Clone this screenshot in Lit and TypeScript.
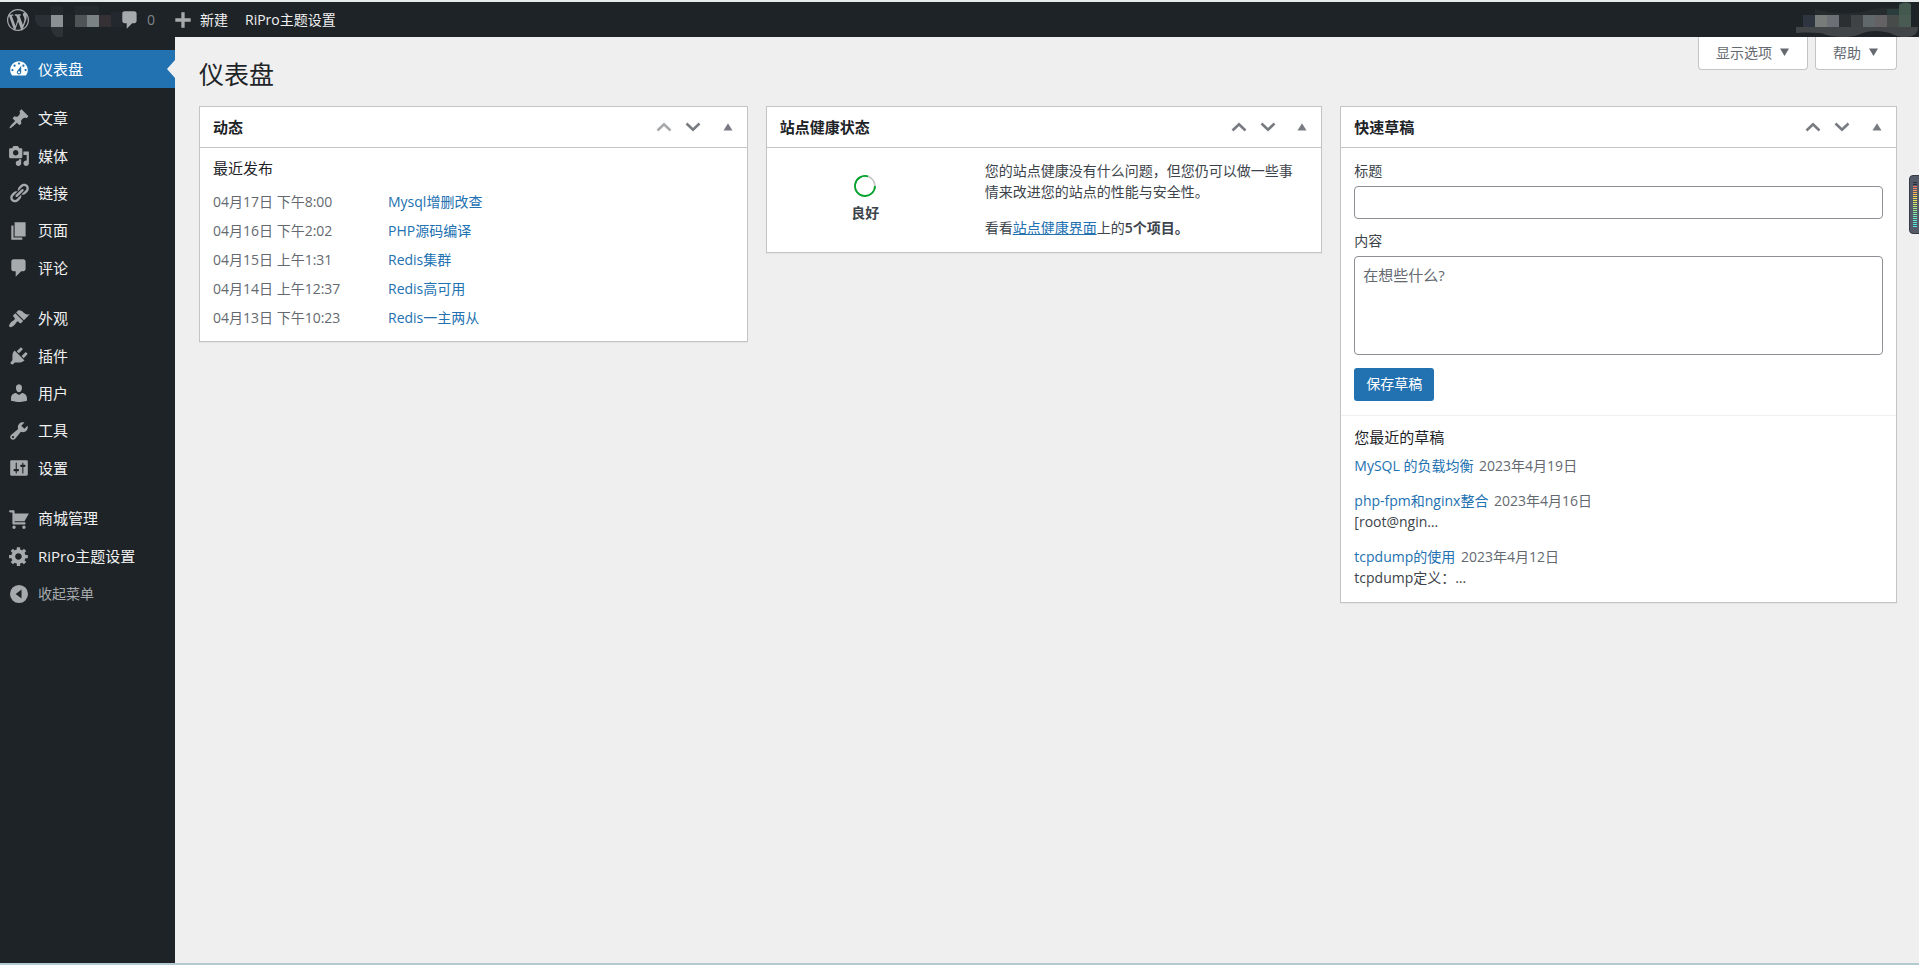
import { LitElement, html, svg, css } from "lit";
import { customElement, property } from "lit/decorators.js";
import { classMap } from "lit/directives/class-map.js";

const ICONS: Record<string, string> = {
  wordpress:
    "M20 10c0-5.51-4.49-10-10-10C4.48 0 0 4.49 0 10c0 5.52 4.48 10 10 10 5.51 0 10-4.48 10-10zM7.78 15.37L4.37 6.22c.55-.02 1.17-.08 1.17-.08.5-.06.44-1.13-.06-1.11 0 0-1.45.11-2.37.11-.18 0-.37 0-.58-.01C4.12 2.69 6.87 1.11 10 1.11c2.33 0 4.45.87 6.05 2.34-.68-.11-1.65.39-1.65 1.58 0 .74.45 1.36.9 2.1.35.61.55 1.36.55 2.46 0 1.49-1.4 5-1.4 5l-3.03-8.37c.54-.02.82-.17.82-.17.5-.05.44-1.25-.06-1.22 0 0-1.44.12-2.38.12-.87 0-2.33-.12-2.33-.12-.5-.03-.56 1.2-.06 1.22l.92.08 1.26 3.41zM17.41 10c.24-.64.74-1.87.43-4.25.7 1.29 1.05 2.71 1.05 4.25 0 3.29-1.73 6.24-4.4 7.78.97-2.59 1.94-5.2 2.92-7.78zM6.1 18.09C3.12 16.65 1.11 13.53 1.11 10c0-1.3.23-2.48.72-3.59C3.25 10.3 4.67 14.2 6.1 18.09zm4.03-6.63l2.58 6.98c-.86.29-1.76.45-2.71.45-.79 0-1.57-.11-2.29-.33.81-2.38 1.62-4.74 2.42-7.1z",
  plus: "M17 8.5v3h-5.5V17h-3v-5.5H3v-3h5.5V3h3v5.5z",
  dashboard:
    "M3.76 16h12.48c1.1-1.37 1.76-3.11 1.76-5 0-4.42-3.58-8-8-8s-8 3.58-8 8c0 1.89.66 3.63 1.76 5zM10 4c.55 0 1 .45 1 1s-.45 1-1 1-1-.45-1-1 .45-1 1-1zM6 6c.55 0 1 .45 1 1s-.45 1-1 1-1-.45-1-1 .45-1 1-1zm8 0c.55 0 1 .45 1 1s-.45 1-1 1-1-.45-1-1 .45-1 1-1zm-5.37 5.55L12 7v6c0 1.1-.9 2-2 2s-2-.9-2-2c0-.57.24-1.08.63-1.45zM4 10c.55 0 1 .45 1 1s-.45 1-1 1-1-.45-1-1 .45-1 1-1zm12 0c.55 0 1 .45 1 1s-.45 1-1 1-1-.45-1-1 .45-1 1-1zm-5 3c0-.55-.45-1-1-1s-1 .45-1 1 .45 1 1 1 1-.45 1-1z",
  post: "M10.44 3.02l1.82-1.82 6.36 6.35-1.83 1.82c-1.05-.68-2.48-.57-3.41.36l-.75.75c-.92.93-1.04 2.35-.35 3.41l-1.83 1.82-2.41-2.41-2.8 2.79c-.42.42-3.38 2.71-3.8 2.29s1.86-3.39 2.28-3.81l2.79-2.79L4.1 9.36l1.83-1.82c1.05.69 2.48.57 3.4-.36l.75-.75c.93-.92 1.05-2.35.36-3.41z",
  media:
    "M13 11V4c0-.55-.45-1-1-1h-1.67L9 1H5L3.67 3H2c-.55 0-1 .45-1 1v7c0 .55.45 1 1 1h10c.55 0 1-.45 1-1zM7 4.5c1.38 0 2.5 1.12 2.5 2.5S8.38 9.5 7 9.5 4.5 8.38 4.5 7 5.62 4.5 7 4.5zM14 6h5v10.5c0 1.38-1.12 2.5-2.5 2.5S14 17.88 14 16.5s1.12-2.5 2.5-2.5c.17 0 .34.02.5.05V9h-3V6zm-4 8.05V13h2v3.5c0 1.38-1.12 2.5-2.5 2.5S7 17.88 7 16.5 8.12 14 9.5 14c.17 0 .34.02.5.05z",
  link: "M17.74 2.76c1.68 1.69 1.68 4.41 0 6.1l-1.53 1.52c-1.12 1.12-2.7 1.47-4.14 1.09l2.62-2.61.76-.77.76-.76c.84-.84.84-2.2 0-3.04-.84-.85-2.2-.85-3.04 0l-.77.76-3.38 3.38c-.37-1.44-.02-3.02 1.1-4.14l1.52-1.53c1.69-1.68 4.42-1.68 6.1 0zM8.59 13.43l5.34-5.34c.42-.42.42-1.1 0-1.52-.44-.43-1.13-.39-1.53 0l-5.33 5.34c-.42.42-.42 1.1 0 1.52.44.43 1.13.39 1.52 0zm-.76 2.29l4.14-4.15c.38 1.44.03 3.02-1.09 4.14l-1.52 1.53c-1.69 1.68-4.41 1.68-6.1 0-1.68-1.68-1.68-4.42 0-6.1l1.53-1.52c1.12-1.12 2.7-1.47 4.14-1.1l-4.14 4.15c-.85.84-.85 2.2 0 3.05.84.84 2.2.84 3.04 0z",
  page: "M6 15V2h10v13H6zm-1 1h8v2H3V5h2v11z",
  comment:
    "M5 2h9c1.1 0 2 .9 2 2v7c0 1.1-.9 2-2 2h-2l-5 5v-5H5c-1.1 0-2-.9-2-2V4c0-1.1.9-2 2-2z",
  appearance:
    "M14.48 11.06L7.41 3.99l1.5-1.5c.5-.56 2.3-.47 3.51.32 1.21.8 1.43 1.28 2.91 2.1 1.18.64 2.45 1.26 4.45.85zm-.71.71L6.7 4.7 4.93 6.47c-.39.39-.39 1.02 0 1.41l1.06 1.06c.39.39.39 1.03 0 1.42-.6.6-1.43 1.11-2.21 1.69-.35.26-.7.53-1.01.84C1.43 14.23.4 16.08 1.4 17.07c.99 1 2.84-.03 4.18-1.36.31-.31.58-.66.85-1.02.57-.78 1.08-1.61 1.69-2.21.39-.39 1.02-.39 1.41 0l1.06 1.06c.39.39 1.02.39 1.41 0z",
  plugin:
    "M13.11 4.36L9.87 7.6 8 5.73l3.24-3.24c.35-.34 1.05-.2 1.56.32.52.51.66 1.21.31 1.55zm-8 1.77l.91-1.12 9.01 9.01-1.19.84c-.71.71-2.63 1.16-3.82 1.16H6.14L4.9 17.26c-.59.59-1.54.59-2.12 0-.59-.58-.59-1.53 0-2.12l1.24-1.24v-3.88c0-1.13.4-3.19 1.09-3.89zm7.26 3.97l3.24-3.24c.34-.35 1.04-.21 1.55.31.52.51.66 1.21.31 1.55l-3.24 3.25z",
  user: "M10 9.25c-2.27 0-2.73-3.44-2.73-3.44C7 4.02 7.82 2 9.97 2c2.16 0 2.98 2.02 2.71 3.81 0 0-.41 3.44-2.68 3.44zm0 2.57L12.72 10c2.39 0 4.52 2.33 4.52 4.53v2.49s-3.65 1.13-7.24 1.13c-3.65 0-7.24-1.13-7.24-1.13v-2.49c0-2.25 1.94-4.48 4.47-4.48z",
  tool: "M16.68 9.77c-1.34 1.34-3.3 1.67-4.95.99l-5.41 6.52c-.99.99-2.59.99-3.58 0s-.99-2.59 0-3.57l6.52-5.42c-.68-1.65-.35-3.61.99-4.95 1.28-1.28 3.12-1.62 4.72-1.06l-2.89 2.89 2.82 2.82 2.86-2.87c.53 1.58.18 3.39-1.08 4.65zM3.81 16.21c.4.39 1.04.39 1.43 0 .4-.4.4-1.04 0-1.43-.39-.4-1.03-.4-1.43 0-.39.39-.39 1.03 0 1.43z",
  settings:
    "M18 16V4c0-.55-.45-1-1-1H3c-.55 0-1 .45-1 1v12c0 .55.45 1 1 1h14c.55 0 1-.45 1-1zM8 11h1c.55 0 1 .45 1 1s-.45 1-1 1H8v1.5c0 .28-.22.5-.5.5s-.5-.22-.5-.5V13H6c-.55 0-1-.45-1-1s.45-1 1-1h1V5.5c0-.28.22-.5.5-.5s.5.22.5.5V11zm5-2h-1c-.55 0-1-.45-1-1s.45-1 1-1h1V5.5c0-.28.22-.5.5-.5s.5.22.5.5V7h1c.55 0 1 .45 1 1s-.45 1-1 1h-1v5.5c0 .28-.22.5-.5.5s-.5-.22-.5-.5V9z",
  cart: "M6 13h9c.55 0 1 .45 1 1s-.45 1-1 1H5c-.55 0-1-.45-1-1V4H2c-.55 0-1-.45-1-1s.45-1 1-1h3c.55 0 1 .45 1 1v2h13l-4 7H6v1zm-.5 3c.83 0 1.5.67 1.5 1.5S6.33 19 5.5 19 4 18.33 4 17.5 4.67 16 5.5 16zm9 0c.83 0 1.5.67 1.5 1.5s-.67 1.5-1.5 1.5-1.5-.67-1.5-1.5.67-1.5 1.5-1.5z",
  gear: "M18 12h-2.18c-.17.7-.44 1.35-.81 1.93l1.54 1.54-2.1 2.1-1.54-1.54c-.58.36-1.23.63-1.91.79V19H8v-2.18c-.68-.16-1.33-.43-1.91-.79l-1.54 1.54-2.12-2.12 1.54-1.54c-.36-.58-.63-1.23-.79-1.91H1V9.03h2.17c.16-.7.44-1.35.8-1.94L2.43 5.55l2.1-2.1 1.54 1.54c.58-.37 1.24-.64 1.93-.81V2h3v2.18c.68.16 1.33.43 1.91.79l1.54-1.54 2.12 2.12-1.54 1.54c.36.59.64 1.24.8 1.94H18V12zm-8.5 1.5c1.66 0 3-1.34 3-3s-1.34-3-3-3-3 1.34-3 3 1.34 3 3 3z",
  collapse:
    "M10 1.8a8.2 8.2 0 1 0 0 16.4a8.2 8.2 0 1 0 0-16.4zM12.3 6v8L7 10z",
};

const icon = (name: string) => html`<svg
  class="icon"
  viewBox="0 0 20 20"
  aria-hidden="true"
>
  <path fill="currentColor" fill-rule="evenodd" d=${ICONS[name]} />
</svg>`;

interface MenuItem {
  icon: string;
  label: string;
  current?: boolean;
}

const MENU: MenuItem[][] = [
  [{ icon: "dashboard", label: "仪表盘", current: true }],
  [
    { icon: "post", label: "文章" },
    { icon: "media", label: "媒体" },
    { icon: "link", label: "链接" },
    { icon: "page", label: "页面" },
    { icon: "comment", label: "评论" },
  ],
  [
    { icon: "appearance", label: "外观" },
    { icon: "plugin", label: "插件" },
    { icon: "user", label: "用户" },
    { icon: "tool", label: "工具" },
    { icon: "settings", label: "设置" },
  ],
  [
    { icon: "cart", label: "商城管理" },
    { icon: "gear", label: "RiPro主题设置" },
  ],
];

const POSTS = [
  ["04月17日 下午8:00", "Mysql增删改查"],
  ["04月16日 下午2:02", "PHP源码编译"],
  ["04月15日 上午1:31", "Redis集群"],
  ["04月14日 上午12:37", "Redis高可用"],
  ["04月13日 下午10:23", "Redis一主两从"],
];

const DRAFTS = [
  { title: "MySQL 的负载均衡", date: "2023年4月19日", excerpt: "" },
  { title: "php-fpm和nginx整合", date: "2023年4月16日", excerpt: "[root@ngin…" },
  { title: "tcpdump的使用", date: "2023年4月12日", excerpt: "tcpdump定义：…" },
];

/* Level colours of the side meter, top to bottom. */
const METER = [
  "#2a2e3a", "#2a2e3a", "#ff6f6a", "#ff8563", "#ff9b5f", "#ffb05a", "#ffc356",
  "#fdd454", "#f8e256", "#ecea5a", "#dbec62", "#c8ec6c", "#b6ec78", "#a4ec86",
  "#94ec94", "#86eca2", "#7aecb0", "#70ecbc", "#66ecc8", "#5eead0", "#58e8d6",
  "#54e6da", "#50e4dc",
];

const base = css`
  *,
  *::before {
    box-sizing: border-box;
  }
  h1,
  h2,
  h3,
  p,
  ul {
    margin: 0;
    padding: 0;
  }
  ul {
    list-style: none;
  }
  a {
    color: #2271b1;
    text-decoration: none;
  }
  button {
    margin: 0;
    padding: 0;
    border: 0;
    background: none;
    font: inherit;
    color: inherit;
    cursor: pointer;
  }
  svg {
    display: block;
    flex: none;
  }
`;

@customElement("dash-card")
class DashCard extends LitElement {
  @property() heading = "";
  @property({ type: Boolean }) first = false;

  static styles = [
    base,
    css`
      :host {
        display: block;
        background: #fff;
        border: 1px solid #c3c4c7;
        box-shadow: 0 1px 1px rgba(0, 0, 0, 0.04);
      }
      .head {
        display: flex;
        align-items: center;
        height: 41px;
        padding: 0 5px 0 13px;
        border-bottom: 1px solid #c3c4c7;
      }
      .title {
        flex: 1;
        font-size: 15px;
        line-height: 21px;
        font-weight: 600;
        color: #1d2327;
      }
      .handles {
        display: flex;
        color: #787c82;
      }
      .handle {
        display: grid;
        place-items: center;
        width: 29px;
        height: 40px;
      }
      .toggle {
        width: 28px;
        margin-left: 6px;
      }
      .handle:disabled {
        color: #a7aaad;
      }
    `,
  ];

  render() {
    return html`
      <div class="head">
        <h2 class="title">${this.heading}</h2>
        <div class="handles">
          <button class="handle" aria-label="上移" ?disabled=${this.first}>
            <svg width="16" height="10" viewBox="0 0 16 10">
              <path d="M1.5 8.5L8 2.200l6.500 6.300" fill="none" stroke="currentColor" stroke-width="2.600" />
            </svg>
          </button>
          <button class="handle" aria-label="下移">
            <svg width="16" height="10" viewBox="0 0 16 10">
              <path d="M1.5 1.5L8 7.800l6.500-6.300" fill="none" stroke="currentColor" stroke-width="2.600" />
            </svg>
          </button>
          <button class="handle toggle" aria-label="切换面板">
            <svg width="10" height="8" viewBox="0 0 10 8">
              <path d="M.5 7.500L5 .2l4.500 7.300z" fill="currentColor" />
            </svg>
          </button>
        </div>
      </div>
      <slot></slot>
    `;
  }
}

@customElement("app-root")
class AppRoot extends LitElement {
  static styles = [
    base,
    css`
      :host {
        display: flex;
        flex-direction: column;
        min-height: 100vh;
        box-sizing: border-box;
        border-top: 2px solid #e4e9ea;
        border-bottom: 2px solid #b4cad3;
        background: #efefef;
        color: #3c434a;
        font-family: "Open Sans", "Noto Sans CJK SC", sans-serif;
        font-size: 14px;
        line-height: 21px;
      }
      .icon {
        width: 22px;
        height: 22px;
      }

      /* Admin bar */
      .bar {
        display: flex;
        align-items: center;
        height: 35px;
        padding-left: 7px;
        background: #1d2327;
        color: #f0f0f1;
      }
      .bar a {
        display: flex;
        align-items: center;
        color: inherit;
      }
      .bar .icon {
        color: #a7aaad;
      }
      .site {
        margin: 0 -6px 0 6px;
      }
      .count {
        color: #80858a;
        margin: 0 17px 0 6px;
      }
      .new {
        gap: 6px;
        margin-right: 17px;
      }
      .account {
        margin-left: auto;
      }

      /* Side menu */
      .body {
        flex: 1;
        display: flex;
      }
      .side {
        flex: none;
        width: 175px;
        padding-top: 13px;
        background: #1d2327;
        color: #f0f0f1;
        font-size: 15px;
      }
      .group {
        display: grid;
        grid-auto-rows: 1fr;
        margin-bottom: 13px;
      }
      .five {
        height: 187px;
      }
      .two {
        height: 75px;
        margin-bottom: 0;
      }
      .one {
        height: 38px;
        margin-bottom: 12px;
      }
      .item {
        display: flex;
        align-items: center;
        gap: 8px;
        width: 100%;
        height: 100%;
        padding-left: 8px;
        color: inherit;
      }
      .item .icon {
        color: #a7aaad;
      }
      .current {
        position: relative;
        background: #2271b1;
        color: #fff;
      }
      .current .icon {
        color: #fff;
      }
      .current::before {
        content: "";
        position: absolute;
        right: 0;
        top: 10px;
        border: 9px solid transparent;
        border-left-width: 0;
        border-right: 8px solid #efefef;
      }
      .collapse {
        height: 37px;
        font-size: 14px;
        color: #a7aaad;
      }

      /* Content */
      .main {
        flex: 1;
        min-width: 0;
        padding: 0 22px 24px 24px;
      }
      .top {
        display: flex;
        justify-content: space-between;
        align-items: flex-start;
        margin-bottom: 16px;
      }
      .page-title {
        padding-top: 21px;
        font-size: 25px;
        line-height: 32px;
        font-weight: 400;
        color: #1d2327;
      }
      .meta {
        display: flex;
        gap: 7px;
      }
      .meta-button {
        display: flex;
        align-items: center;
        gap: 8px;
        height: 33px;
        padding: 0 18px 2px 17px;
        border: 1px solid #c3c4c7;
        border-top: 0;
        border-radius: 0 0 4px 4px;
        background: #fff;
        color: #646970;
      }
      .grid {
        display: grid;
        grid-template-columns: 549fr 557fr 557fr;
        gap: 18px;
        align-items: start;
      }
      .sub {
        font-size: 15px;
        line-height: 21px;
        font-weight: 400;
        color: #1d2327;
      }
      .activity {
        padding: 10px 13px 9px;
      }
      .activity .sub {
        margin-bottom: 8px;
      }
      .post {
        display: grid;
        grid-template-columns: 175px 1fr;
        line-height: 29px;
        color: #646970;
      }
      .health {
        display: grid;
        grid-template-columns: 171px 1fr;
        gap: 34px;
        padding: 12px 20px 14px 13px;
      }
      .gauge {
        display: flex;
        flex-direction: column;
        align-items: center;
        padding-top: 15px;
        gap: 5px;
        font-weight: 600;
      }
      .advice {
        display: flex;
        flex-direction: column;
        gap: 15px;
      }
      .advice a {
        text-decoration: underline;
      }
      .strong {
        font-weight: 600;
      }
      .form {
        display: flex;
        flex-direction: column;
        align-items: stretch;
        padding: 12px 13px 14px;
      }
      .label {
        margin-bottom: 5px;
      }
      .field {
        width: 100%;
        border: 1px solid #8c8f94;
        border-radius: 4px;
        background: #fff;
        padding: 0 8px;
        font: inherit;
        color: #2c3338;
      }
      .line {
        height: 33px;
        margin-bottom: 11px;
      }
      .area {
        display: block;
        height: 99px;
        margin-bottom: 13px;
        padding: 8px;
        font-size: 15px;
        resize: none;
      }
      .area::placeholder {
        color: #646970;
        opacity: 1;
      }
      .save {
        align-self: flex-start;
        height: 33px;
        padding: 0 12px 2px;
        border-radius: 3px;
        background: #2271b1;
        color: #fff;
      }
      .drafts {
        display: flex;
        flex-direction: column;
        padding: 11px 13px 14px;
        border-top: 1px solid #f0f0f1;
      }
      .drafts .sub {
        margin-bottom: 7px;
      }
      .draft + .draft {
        margin-top: 14px;
      }
      .date {
        margin-left: 2px;
        color: #646970;
      }

      /* Level meter docked on the window edge */
      .meter {
        position: fixed;
        right: 0;
        top: 175px;
      }
    `,
  ];

  private siteMosaic() {
    return svg`<svg width="90" height="35" viewBox="35 2 90 35" role="img" aria-label="站点">
      <path d="M35 15h16v12H43a8 8 0 0 1-8-8z" fill="#2a3036" />
      <path d="M51 6h12v9H51zM75 6h24v9H75z" fill="#23292d" />
      <path d="M51 27h12v12a14 14 0 0 1-12-10z" fill="#2c3235" />
      <path d="M63 15h12v12H63z" fill="#1f2529" />
      <path d="M51 15h12v12H51z" fill="#8b9093" />
      <path d="M75 15h12v12H75z" fill="#4f5557" />
      <path d="M87 15h12v12H87z" fill="#7b8284" />
      <path d="M99 15h12v12H99z" fill="#353033" />
      <path d="M111 12h12v15H111z" fill="#23282f" />
    </svg>`;
  }

  private accountMosaic() {
    const cells = ["#2e3440", "#777b7a", "#6c6f76", "#2b2f31", "#3f4346", "#60686b", "#646264", "#474b49", "#4a5b53"];
    return svg`<svg width="123" height="35" viewBox="1796 2 123 35" role="img" aria-label="账户">
      <path d="M1815 9q14 4 25 4q14 1 26-2q16-5 33-3v8h-84z" fill="#262b2e" />
      <path d="M1887 9h12V4q6-4 12 0v11h-24z" fill="#2a3d3c" />
      <path d="M1899 5q6-4 12-1v11h-12z" fill="#43584f" />
      <path d="M1796 27h122q0 10-13 10-8 0-15-4-16-4-27 0-8 4-20 4-13 0-22-4-18-1-25 0z" fill="#414548" />
      ${cells.map((c, i) => svg`<rect x=${1803 + i * 12} y="15" width="12" height="12" fill=${c} />`)}
    </svg>`;
  }

  private meterGauge() {
    return svg`<svg class="meter" width="10" height="60" viewBox="0 0 10 60" aria-hidden="true">
      <path d="M10 .5H4A3.500 3.500 0 0 0 .5 4v51A3.500 3.500 0 0 0 4 58.500h6" fill="#555a68" stroke="#353a46" />
      ${METER.map((c, i) => svg`<rect x="4" y=${7 + i * 2} width="4" height="1" fill=${c} />`)}
    </svg>`;
  }

  private caret() {
    return html`<svg width="9" height="8" viewBox="0 0 9 8" aria-hidden="true">
      <path d="M0 .5h9L4.500 8z" fill="currentColor" />
    </svg>`;
  }

  render() {
    return html`
      <header class="bar">
        <a href="#" aria-label="WordPress">${icon("wordpress")}</a>
        <a class="site" href="#">${this.siteMosaic()}</a>
        <a href="#">${icon("comment")}<span class="count">0</span></a>
        <a class="new" href="#">${icon("plus")}<span>新建</span></a>
        <a href="#">RiPro主题设置</a>
        <a class="account" href="#">${this.accountMosaic()}</a>
      </header>
      <div class="body">
        <nav class="side">
          ${MENU.map(
            (group) => html`<ul
              class=${classMap({
                group: true,
                one: group.length === 1,
                two: group.length === 2,
                five: group.length === 5,
              })}
            >
              ${group.map(
                (m) => html`<li>
                  <a href="#" class=${classMap({ item: true, current: !!m.current })}
                    >${icon(m.icon)}<span>${m.label}</span></a
                  >
                </li>`
              )}
            </ul>`
          )}
          <button class="item collapse">${icon("collapse")}<span>收起菜单</span></button>
        </nav>
        <main class="main">
          <div class="top">
            <h1 class="page-title">仪表盘</h1>
            <div class="meta">
              <button class="meta-button">显示选项 ${this.caret()}</button>
              <button class="meta-button">帮助 ${this.caret()}</button>
            </div>
          </div>
          <div class="grid">
            <dash-card heading="动态" first>
              <div class="activity">
                <h3 class="sub">最近发布</h3>
                <ul>
                  ${POSTS.map(
                    ([date, title]) => html`<li class="post"><span>${date}</span><a href="#">${title}</a></li>`
                  )}
                </ul>
              </div>
            </dash-card>
            <dash-card heading="站点健康状态">
              <div class="health">
                <div class="gauge">
                  <svg width="22" height="22" viewBox="0 0 22 22" aria-hidden="true">
                    <circle cx="11" cy="11" r="10" fill="none" stroke="#c3c4c7" stroke-width="1.500" />
                    <path d="M21 11A10 10 0 1 1 14 1.460" fill="none" stroke="#00a32a" stroke-width="1.800" />
                  </svg>
                  <span>良好</span>
                </div>
                <div class="advice">
                  <p>您的站点健康没有什么问题，但您仍可以做一些事情来改进您的站点的性能与安全性。</p>
                  <p>看看<a href="#">站点健康界面</a>上的<span class="strong">5个项目。</span></p>
                </div>
              </div>
            </dash-card>
            <dash-card heading="快速草稿">
              <form class="form" @submit=${(e: Event) => e.preventDefault()}>
                <label class="label" for="title">标题</label>
                <input class="field line" id="title" type="text" autocomplete="off" />
                <label class="label" for="content">内容</label>
                <textarea class="field area" id="content" placeholder="在想些什么?"></textarea>
                <button class="save" type="submit">保存草稿</button>
              </form>
              <div class="drafts">
                <h3 class="sub">您最近的草稿</h3>
                <ul>
                  ${DRAFTS.map(
                    (d) => html`<li class="draft">
                      <a href="#">${d.title}</a> <time class="date">${d.date}</time>
                      ${d.excerpt ? html`<p>${d.excerpt}</p>` : ""}
                    </li>`
                  )}
                </ul>
              </div>
            </dash-card>
          </div>
        </main>
      </div>
      ${this.meterGauge()}
    `;
  }
}
